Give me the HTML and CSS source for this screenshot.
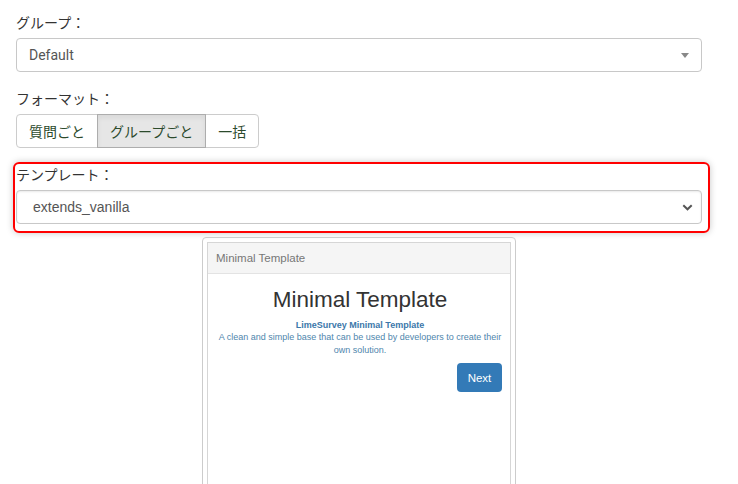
FILE: index.html
```html
<!DOCTYPE html>
<html lang="ja">
<head>
<meta charset="utf-8">
<link rel="stylesheet" href="styles.css">
</head>
<body>
<div class="page">
  <div class="label">グループ：</div>
  <div class="select select-group">
    <span class="sel-text roboto">Default</span>
    <span class="caret"></span>
  </div>

  <div class="label label-format">フォーマット：</div>
  <div class="btn-group">
    <span class="btn">質問ごと</span>
    <span class="btn active">グループごと</span>
    <span class="btn">一括</span>
  </div>

  <div class="highlight">
    <div class="label label-tpl">テンプレート：</div>
    <div class="select select-tpl">
      <span class="sel-text arial">extends_vanilla</span>
      <svg class="chev" width="11" height="7" viewBox="0 0 11 7"><path d="M1.3 1.3 L5.5 5.3 L9.7 1.3" fill="none" stroke="#555" stroke-width="2"/></svg>
    </div>
  </div>

  <div class="preview">
    <div class="preview-inner">
      <div class="pv-head">Minimal Template</div>
      <div class="pv-body">
        <div class="pv-title">Minimal Template</div>
        <div class="pv-sub">LimeSurvey Minimal Template</div>
        <div class="pv-desc">A clean and simple base that can be used by developers to create their own solution.</div>
        <div class="pv-actions"><span class="pv-next">Next</span></div>
      </div>
    </div>
  </div>
</div>
</body>
</html>
```

FILE: styles.css
```css
html, body {
  margin: 0;
  padding: 0;
  background: #fff;
  overflow: hidden;
}
body {
  width: 738px;
  height: 484px;
  font-family: "Noto Sans CJK JP", "Liberation Sans", sans-serif;
  color: #333;
}
.page {
  padding: 12px 36px 0 16px;
}
.label {
  font-size: 14px;
  line-height: 20px;
  height: 20px;
  margin-bottom: 6px;
  color: #333;
}
.label-format {
  margin-top: 16px;
}
.select {
  height: 34px;
  box-sizing: border-box;
  border: 1px solid #c8c8c8;
  border-radius: 4px;
  display: flex;
  align-items: center;
  justify-content: space-between;
  background: #fff;
}
.select-group {
  padding: 0 12px 0 12px;
}
.roboto {
  font-family: Roboto, "Liberation Sans", sans-serif;
  font-size: 14px;
  color: #555;
}
.arial {
  font-family: "Liberation Sans", Arial, sans-serif;
  font-size: 14px;
  color: #555;
}
.caret {
  width: 0;
  height: 0;
  border-left: 4px solid transparent;
  border-right: 4px solid transparent;
  border-top: 5px solid #888;
}
.btn-group {
  display: flex;
  height: 34px;
  margin-bottom: 14px;
}
.btn {
  box-sizing: border-box;
  height: 34px;
  padding: 0 12px;
  border: 1px solid #ccc;
  display: flex;
  align-items: center;
  font-size: 14px;
  color: #2c4a2c;
  background: #fff;
}
.btn + .btn {
  margin-left: -1px;
}
.btn:first-child {
  border-radius: 4px 0 0 4px;
}
.btn:last-child {
  border-radius: 0 4px 4px 0;
}
.btn.active {
  background: #e6e6e6;
  border-color: #adadad;
  box-shadow: inset 0 3px 5px rgba(0,0,0,0.06);
  position: relative;
  z-index: 1;
}
.highlight {
  margin-left: -3px;
  width: 697px;
  box-sizing: border-box;
  border: 2px solid #ff0000;
  border-radius: 6px;
  padding: 0 6px 7px 1px;
  box-shadow: 0 0 7px rgba(0,0,0,0.22);
}
.label-tpl {
  margin-bottom: 6px;
}
.select-tpl {
  height: 34px;
  padding: 0 8px 0 16px;
  box-shadow: inset 0 1px 2px rgba(0,0,0,0.09);
}
.chev {
  display: block;
}
.preview {
  width: 314px;
  margin: 4px auto 0;
  box-sizing: border-box;
  border: 1px solid #ccc;
  border-radius: 4px;
  padding: 4px 4px 0 4px;
  height: 260px;
}
.preview-inner {
  border: 1px solid #d6d6d6;
  border-bottom: none;
  height: 100%;
  box-sizing: border-box;
  font-family: "Liberation Sans", Arial, sans-serif;
}
.pv-head {
  height: 31px;
  box-sizing: border-box;
  background: #f5f5f5;
  border-bottom: 1px solid #e3e3e3;
  font-size: 11.5px;
  color: #777;
  padding-left: 8px;
  display: flex;
  align-items: center;
}
.pv-body {
  padding: 13px 8px 0 10px;
  text-align: center;
}
.pv-title {
  font-size: 22.5px;
  line-height: 26px;
  color: #333;
}
.pv-sub {
  margin-top: 6px;
  font-size: 9px;
  line-height: 12px;
  font-weight: bold;
  color: #3b78aa;
}
.pv-desc {
  font-size: 9px;
  line-height: 13px;
  color: #4f86ad;
}
.pv-actions {
  display: flex;
  justify-content: flex-end;
  margin-top: 6px;
}
.pv-next {
  width: 45px;
  height: 29px;
  border-radius: 4px;
  background: #337ab7;
  color: #fff;
  font-size: 11.5px;
  display: flex;
  align-items: center;
  justify-content: center;
}
```
